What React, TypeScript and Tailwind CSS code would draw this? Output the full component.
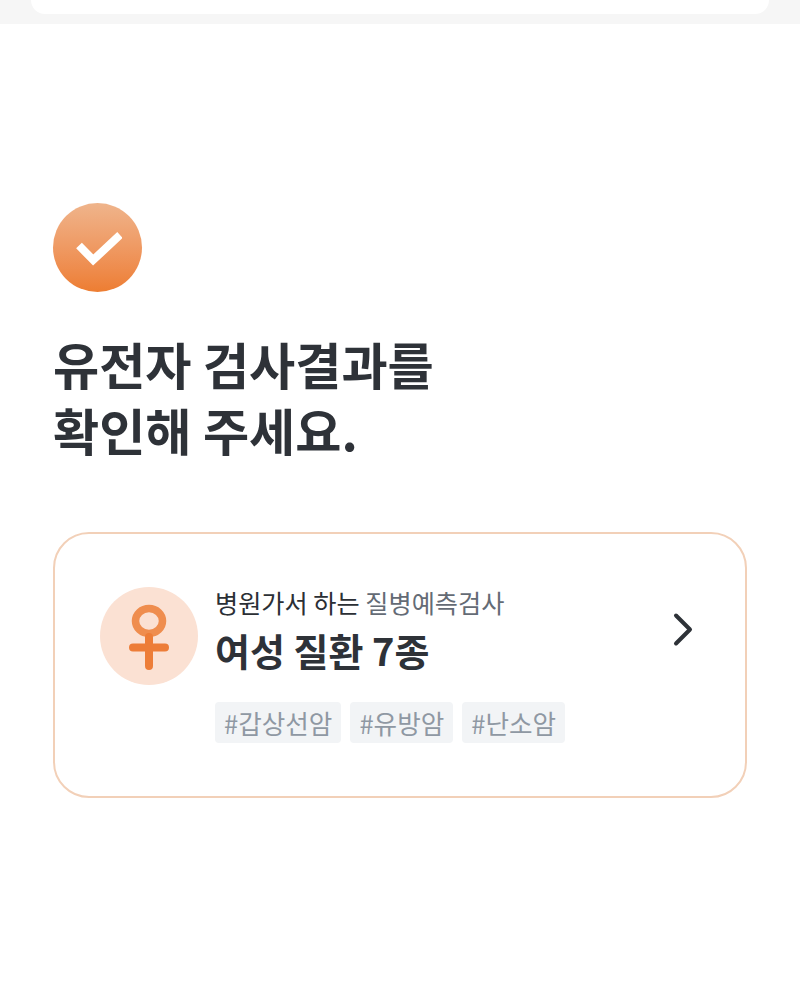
export default function App() {
  return (
    <div className="w-[800px] h-[1007px] bg-white overflow-hidden font-['Noto_Sans_CJK_KR',sans-serif]">
      <div className="h-6 bg-[#f6f6f6] px-[31px]">
        <div className="h-[14px] bg-white rounded-b-[16px]"></div>
      </div>

      <div className="px-[53px] pt-[179px]">
        <div className="w-[89px] h-[89px] rounded-full bg-gradient-to-b from-[#efb48b] to-[#ed7d31] flex items-center justify-center">
          <svg width="48" height="38" viewBox="0 0 48 38" fill="none">
            <path d="M5 16.5 L19.2 31 L46 6" stroke="white" strokeWidth="8" strokeLinejoin="miter" />
          </svg>
        </div>

        <h1 className="mt-[38px] text-[50.2px] leading-[66px] font-bold text-[#2e3238] whitespace-nowrap">
          유전자 검사결과를
          <br />
          확인해 주세요.
        </h1>

        <div className="mt-[70px] w-[694px] h-[266px] rounded-[36px] border-2 border-[#f2d0b8] pl-[45px] pr-[50px] pt-[53px] flex items-start">
          <div className="w-[98px] h-[98px] rounded-full bg-[#fbe1d3] flex items-center justify-center shrink-0">
            <svg width="40" height="68" viewBox="0 0 40 68" fill="none">
              <ellipse cx="20" cy="19" rx="13.5" ry="12.5" stroke="#ef8d4e" strokeWidth="7.5" />
              <path d="M20 35 V64 M4 45.5 H36" stroke="#ed7d38" strokeWidth="8" strokeLinecap="round" />
            </svg>
          </div>

          <div className="ml-[17px] flex-1">
            <p className="text-[25.2px] leading-[32px] text-[#2b2f35] whitespace-nowrap -mt-[1px]">
              병원가서 하는 <span className="text-[#646b75]">질병예측검사</span>
            </p>
            <p className="mt-[10px] text-[38px] leading-[44px] font-bold text-[#2e3238] whitespace-nowrap">여성 질환 7종</p>
            <div className="mt-[30px] flex gap-[9px]">
              {["#갑상선암", "#유방암", "#난소암"].map((tag) => (
                <span key={tag} className="h-[41px] px-[9px] rounded-[4px] bg-[#f2f4f6] text-[25.6px] leading-[41px] text-[#8f98a3] whitespace-nowrap">
                  {tag}
                </span>
              ))}
            </div>
          </div>

          <svg className="mt-[25px] shrink-0" width="24" height="36" viewBox="0 0 24 36" fill="none">
            <path d="M5 3.5 L19 17.5 L5 31.5" stroke="#2e3238" strokeWidth="4" strokeLinecap="round" strokeLinejoin="round" />
          </svg>
        </div>
      </div>
    </div>
  );
}
